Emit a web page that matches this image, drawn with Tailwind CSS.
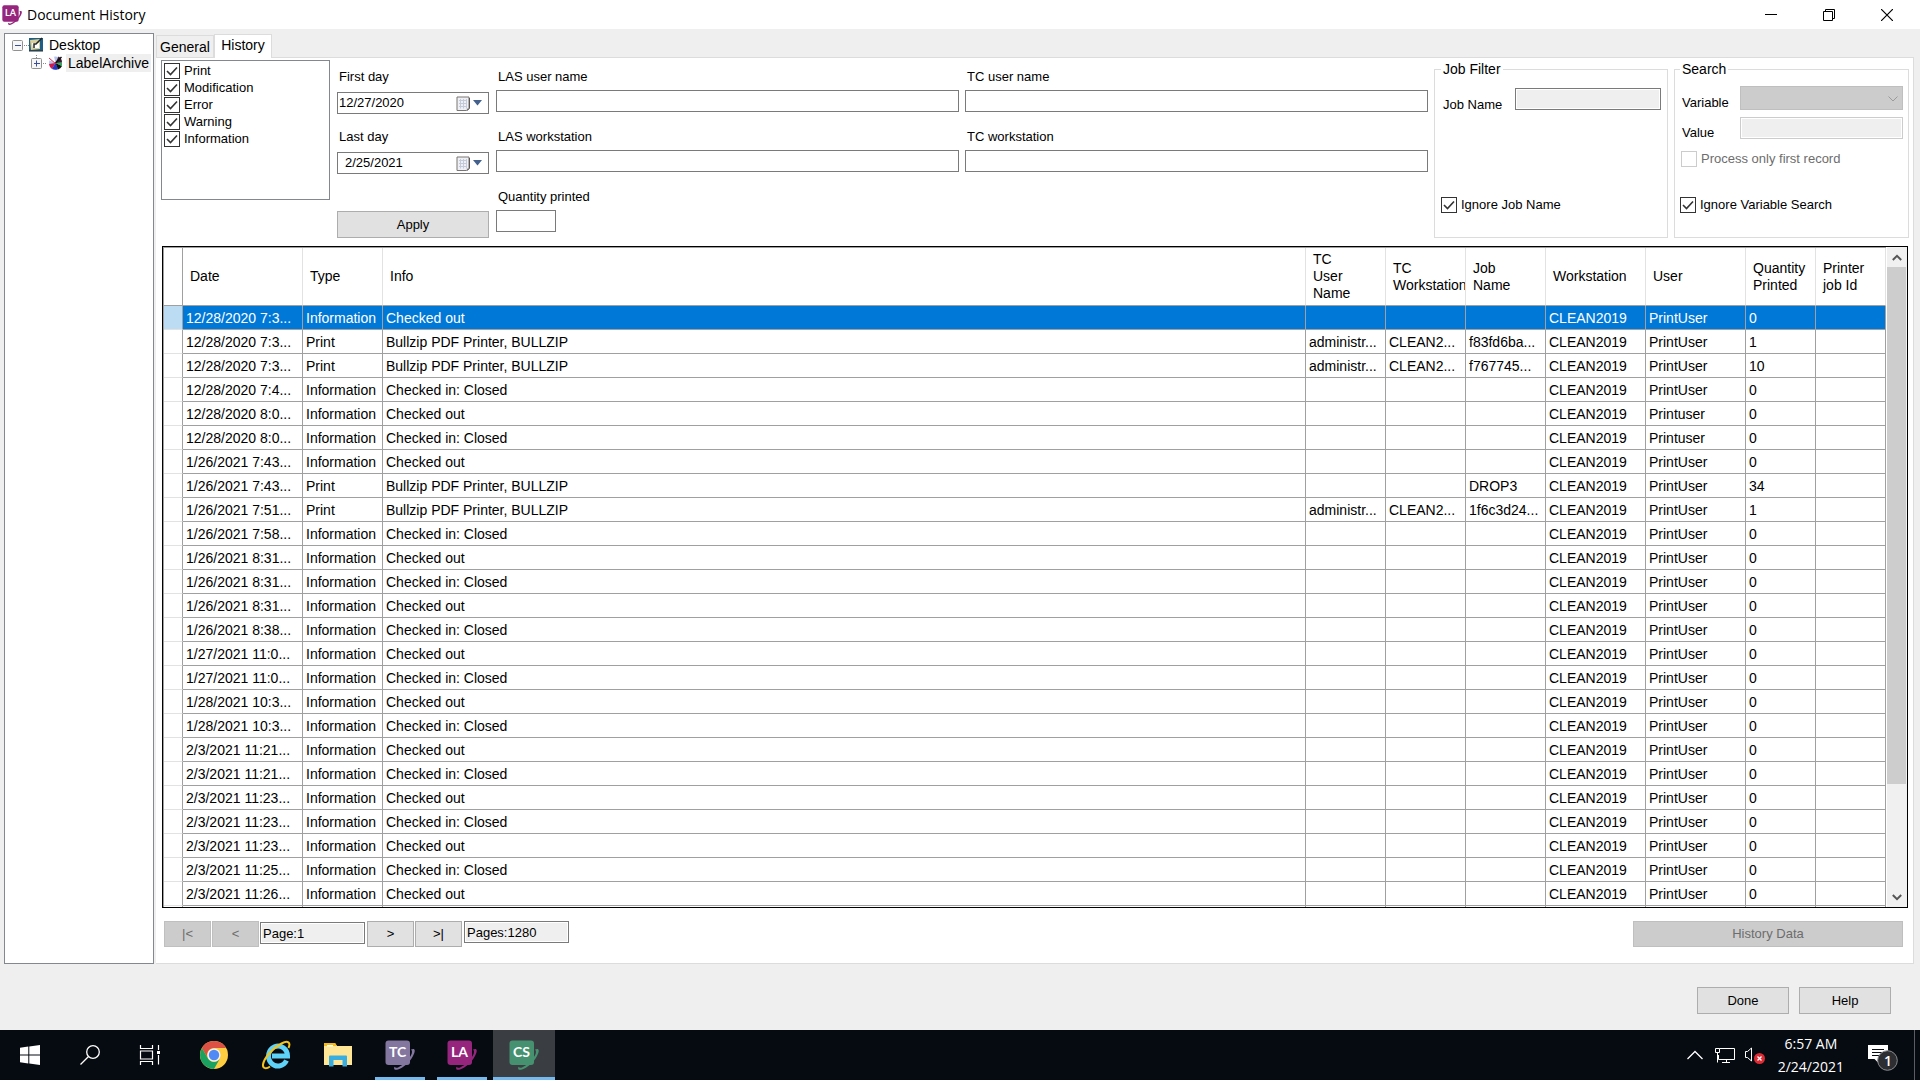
<!DOCTYPE html>
<html lang="en">
<head>
<meta charset="utf-8">
<title>Document History</title>
<script src="https://cdn.jsdelivr.net/npm/@tailwindcss/browser@4"></script>
</head>
<body class="flex min-h-screen flex-col bg-[#efefef] font-['Liberation_Sans',Arial,sans-serif] text-[13px] leading-4 text-black">

<svg class="hidden" aria-hidden="true">
  <symbol id="badge" viewBox="0 0 30 30">
    <rect x="0.5" y="0.5" width="24.500" height="24.500" rx="3" fill="currentColor"/>
    <path d="M26 9.500c4-1.800 5 .8 2 6.500-3.500 6.500-10 12-15 13.500-3.500 1-4.500-.5-3.500-2.800 1 1.300 2 1.500 4 .6 4.500-2 10-7 12.500-12 1.300-2.800 1.300-4.800 0-5.800z" fill="currentColor"/>
  </symbol>
  <symbol id="calendar" viewBox="0 0 14 15">
    <path d="M1 1h12v10.500l-2.500 3H1z" fill="#eef0f5" stroke="#7b7573"/>
    <path d="M3 4.500h8M3 7.500h8M3 10.500h8M4.500 3v9.500M7.500 3v9.500M10.500 3v9.500" stroke="#c3cad8" fill="none"/>
    <path d="M13.500 2v10.500l-2.500 2" stroke="#5c5655" fill="none"/>
  </symbol>
  <symbol id="tick" viewBox="0 0 16 16"><path d="M3 8l3.500 3.500L13 4.500" fill="none" stroke="#333" stroke-width="1.600"/></symbol>
</svg>

<header class="flex h-[29px] shrink-0 items-center bg-white pl-[2px]">
  <span class="relative h-5 w-5 text-[#96257d]">
    <svg class="h-5 w-5"><use href="#badge"/></svg>
    <span class="absolute left-[3px] top-[2px] font-['Lato',sans-serif] text-[9px] leading-3 font-bold text-white">LA</span>
  </span>
  <h1 class="ml-[5px] flex-1 font-['Open_Sans',sans-serif] text-[14px] leading-5">Document History</h1>
  <button class="flex h-7 w-[58px] items-center justify-center" aria-label="Minimize"><svg width="12" height="12"><path d="M0 5.500h12" stroke="#000"/></svg></button>
  <button class="flex h-7 w-[58px] items-center justify-center" aria-label="Restore"><svg width="12" height="12" fill="none" stroke="#000"><path d="M.5 2.500h9v9h-9zM2.500 2.500v-2h9v9h-2"/></svg></button>
  <button class="mr-1 flex h-7 w-[58px] items-center justify-center" aria-label="Close"><svg width="12" height="12"><path d="M0 0l12 12M12 0L0 12" stroke="#000" stroke-width="1.200"/></svg></button>
</header>

<main class="flex flex-1 gap-[2px] pl-1 pr-[6px] pt-1">
  <nav class="w-[150px] shrink-0 border border-[#828790] bg-white pl-[7px] pt-[2px] text-[14px]" aria-label="Documents">
    <div class="flex h-[18px] items-center">
      <svg width="37" height="18" class="shrink-0">
        <rect x=".5" y="4.500" width="10" height="10" rx="1" fill="#f7f7f7" stroke="#919191"/><path d="M3 9.500h6" stroke="#3a4f9a"/>
        <path d="M12 9.500h5" stroke="#888" stroke-dasharray="1 1"/>
        <rect x="17" y="2" width="14" height="13" fill="#1f5f84"/><path d="M18 4l10-1v10l-9 1z" fill="#d9cf9a"/><path d="M20 7h7v5h-6z" fill="#fff"/><path d="M22 12v-4h2l6-6" stroke="#20282c" stroke-width="1.500" fill="none"/><path d="M17 15h14" stroke="#2a2a2a"/>
      </svg>
      <span>Desktop</span>
    </div>
    <div class="flex h-[18px] items-center">
      <svg width="54" height="18" class="shrink-0">
        <path d="M24.500 -1v5M31 9.500h4" stroke="#888" stroke-dasharray="1 1"/>
        <rect x="19.500" y="4.500" width="10" height="10" rx="1" fill="#f7f7f7" stroke="#919191"/><path d="M22 9.500h6M24.500 6.500v6" stroke="#3a4f9a"/>
        <circle cx="43.500" cy="9" r="6.500" fill="#b9c4ec"/><path d="M43.500 9L37 6a7 7 0 0 1 5-3.500z" fill="#fff"/><path d="M43.500 9l-6.500 1a7 7 0 0 0 3 5z" fill="#d11a4a"/><path d="M43.500 9l-3.500 6a7 7 0 0 0 6 .2z" fill="#2335c4"/><path d="M43.500 9l6.500 3a6 6 0 0 1-4 3.500z" fill="#111"/><path d="M43.500 9h6.500v3z" fill="#22b14c"/><path d="M43.500 9l3-6.500a7 7 0 0 1 3.500 6z" fill="#3a1a30"/><path d="M37 4l7 6" stroke="#e0284a" fill="none"/><path d="M43.500 9l6-6" stroke="#111" stroke-width="1.500"/>
      </svg>
      <span class="bg-[#efefef] px-[2px] leading-[18px]">LabelArchive</span>
    </div>
  </nav>

  <section class="flex min-w-0 flex-1 flex-col">
    <div class="flex h-6 items-end text-[14px]" role="tablist">
      <button role="tab" aria-selected="false" class="h-[22px] w-[58px] border border-b-0 border-[#dcdcdc]">General</button>
      <button role="tab" aria-selected="true" class="relative -mb-px h-6 w-[58px] border border-b-0 border-[#dcdcdc] bg-white pb-1 text-center">History</button>
    </div>
    <div class="flex flex-1 flex-col border-y border-r border-[#dcdcdc] bg-white">

      <form class="flex gap-[6px] pl-[5px] pr-[4px] pt-[2px]" onsubmit="return false">
        <div id="kinds" class="h-[140px] w-[169px] shrink-0 border border-[#828790] pl-[2px] pt-px"></div>

        <div class="w-[154px] shrink-0 px-px">
          <div class="h-[60px] pt-2">
            <label for="first" class="block pl-[2px] leading-[18px]">First day</label>
            <div class="mt-1.5 flex h-[22px] items-center border border-[#7a7a7a] pl-[1px] pr-[6px]">
              <input id="first" value="12/27/2020" class="min-w-0 flex-1 outline-none">
              <button type="button" class="flex items-center gap-[3px]" aria-label="Open calendar for first day"><svg width="14" height="15"><use href="#calendar"/></svg><svg width="9" height="6"><path d="M0 0h9L4.500 5.500z" fill="#44618e"/></svg></button>
            </div>
          </div>
          <div class="h-[60px] pt-2">
            <label for="last" class="block pl-[2px] leading-[18px]">Last day</label>
            <div class="mt-1.5 flex h-[22px] items-center border border-[#7a7a7a] pl-[7px] pr-[6px]">
              <input id="last" value="2/25/2021" class="min-w-0 flex-1 outline-none">
              <button type="button" class="flex items-center gap-[3px]" aria-label="Open calendar for last day"><svg width="14" height="15"><use href="#calendar"/></svg><svg width="9" height="6"><path d="M0 0h9L4.500 5.500z" fill="#44618e"/></svg></button>
            </div>
          </div>
          <button class="mt-[31px] block h-[27px] w-full border border-[#adadad] bg-[#e1e1e1]">Apply</button>
        </div>

        <div class="min-w-0 flex-1">
          <div class="h-[60px] pt-2"><label for="lu" class="block pl-[2px] leading-[18px]">LAS user name</label><input id="lu" class="mt-1 block h-[22px] w-full border border-[#7a7a7a] px-1"></div>
          <div class="h-[60px] pt-2"><label for="lw" class="block pl-[2px] leading-[18px]">LAS workstation</label><input id="lw" class="mt-1 block h-[22px] w-full border border-[#7a7a7a] px-1"></div>
          <div class="h-[60px] pt-2"><label for="qp" class="block pl-[2px] leading-[18px]">Quantity printed</label><input id="qp" class="mt-1 block h-[22px] w-[60px] border border-[#7a7a7a] px-1"></div>
        </div>

        <div class="min-w-0 flex-1">
          <div class="h-[60px] pt-2"><label for="tu" class="block pl-[2px] leading-[18px]">TC user name</label><input id="tu" class="mt-1 block h-[22px] w-full border border-[#7a7a7a] px-1"></div>
          <div class="h-[60px] pt-2"><label for="tw" class="block pl-[2px] leading-[18px]">TC workstation</label><input id="tw" class="mt-1 block h-[22px] w-full border border-[#7a7a7a] px-1"></div>
        </div>

        <fieldset class="h-[178px] w-[234px] shrink-0 border border-[#dcdcdc] px-[6px]">
          <legend class="px-[2px] text-[14px] leading-[18px]">Job Filter</legend>
          <div class="mt-[10px] flex justify-between pl-[2px]">
            <label for="jn" class="pt-[9px]">Job Name</label>
            <input id="jn" disabled class="h-[22px] w-[146px] border border-[#7a7a7a] bg-[#efefef] shadow-[inset_0_0_0_1px_#fff]">
          </div>
          <label class="mt-[84px] flex items-center gap-1">
            <span class="grid h-4 w-4"><input type="checkbox" checked class="peer col-start-1 row-start-1 h-4 w-4 appearance-none border border-[#333] bg-white"><svg class="pointer-events-none invisible col-start-1 row-start-1 h-4 w-4 peer-checked:visible"><use href="#tick"/></svg></span>Ignore Job Name
          </label>
        </fieldset>

        <fieldset class="h-[178px] w-[235px] shrink-0 border border-[#dcdcdc] px-[5px]">
          <legend class="px-[2px] text-[14px] leading-[18px]">Search</legend>
          <div class="mt-2 flex justify-between pl-[2px]">
            <label for="sv" class="pt-[9px]">Variable</label>
            <span class="grid">
              <select id="sv" disabled class="col-start-1 row-start-1 h-6 w-[163px] appearance-none border border-[#bfbfbf] bg-[#ccc]"></select>
              <svg class="pointer-events-none col-start-1 row-start-1 mr-[5px] self-center justify-self-end" width="10" height="6"><path d="M.5 .5L5 5 9.500 .5" fill="none" stroke="#9a9a9a"/></svg>
            </span>
          </div>
          <div class="mt-1.5 flex h-[22px] justify-between pl-[2px]">
            <label for="va" class="pt-2">Value</label>
            <input id="va" disabled class="h-[22px] w-[163px] border border-[#ccc] bg-[#efefef] shadow-[inset_0_0_0_1px_#fff]">
          </div>
          <label class="mt-3 flex items-center gap-1 pl-px text-[#6d6d6d]"><input type="checkbox" disabled class="h-4 w-4 appearance-none border border-[#ccc] bg-white">Process only first record</label>
          <label class="mt-[30px] flex items-center gap-1">
            <span class="grid h-4 w-4"><input type="checkbox" checked class="peer col-start-1 row-start-1 h-4 w-4 appearance-none border border-[#333] bg-white"><svg class="pointer-events-none invisible col-start-1 row-start-1 h-4 w-4 peer-checked:visible"><use href="#tick"/></svg></span>Ignore Variable Search
          </label>
        </fieldset>
      </form>

      <div class="ml-1.5 mr-[5px] mt-[6px] flex h-[662px] border border-black">
        <div class="min-w-0 flex-1 overflow-hidden border-l border-t border-[#a0a0a0]">
          <table class="w-full table-fixed border-separate border-spacing-0 text-left text-[14px]">
            <colgroup><col class="w-[19px]"><col class="w-[120px]"><col class="w-[80px]"><col><col class="w-[80px]"><col class="w-[80px]"><col class="w-[80px]"><col class="w-[100px]"><col class="w-[100px]"><col class="w-[70px]"><col class="w-[70px]"></colgroup>
            <thead>
              <tr class="h-[58px] leading-[17px]">
                <th class="border-b border-r border-[#a0a0a0]"></th>
                <th class="border-b border-r border-b-[#a0a0a0] border-r-[#e2e2e2] pl-[7px] font-normal">Date</th>
                <th class="border-b border-r border-b-[#a0a0a0] border-r-[#e2e2e2] pl-[7px] font-normal">Type</th>
                <th class="border-b border-r border-b-[#a0a0a0] border-r-[#e2e2e2] pl-[7px] font-normal">Info</th>
                <th class="border-b border-r border-b-[#a0a0a0] border-r-[#e2e2e2] pl-[7px] font-normal">TC<br>User<br>Name</th>
                <th class="overflow-hidden border-b border-r border-b-[#a0a0a0] border-r-[#e2e2e2] pl-[7px] font-normal">TC<br>Workstation</th>
                <th class="border-b border-r border-b-[#a0a0a0] border-r-[#e2e2e2] pl-[7px] font-normal">Job<br>Name</th>
                <th class="border-b border-r border-b-[#a0a0a0] border-r-[#e2e2e2] pl-[7px] font-normal">Workstation</th>
                <th class="border-b border-r border-b-[#a0a0a0] border-r-[#e2e2e2] pl-[7px] font-normal">User</th>
                <th class="border-b border-r border-b-[#a0a0a0] border-r-[#e2e2e2] pl-[7px] font-normal">Quantity<br>Printed</th>
                <th class="border-b border-r border-b-[#a0a0a0] border-r-[#e2e2e2] pl-[7px] font-normal">Printer<br>job Id</th>
              </tr>
            </thead>
            <tbody id="rows"></tbody>
          </table>
        </div>
        <div class="ml-px flex w-5 shrink-0 flex-col bg-[#f0f0f0]">
          <button class="flex h-5 items-center justify-center" aria-label="Scroll up"><svg width="10" height="7"><path d="M.8 6L5 1.800 9.200 6" fill="none" stroke="#555" stroke-width="2"/></svg></button>
          <div class="mr-px grow-[5] bg-[#cdcdcd]"></div>
          <div class="grow"></div>
          <button class="flex h-5 items-center justify-center" aria-label="Scroll down"><svg width="10" height="7"><path d="M.8 1L5 5.200 9.200 1" fill="none" stroke="#555" stroke-width="2"/></svg></button>
        </div>
      </div>

      <div class="mb-4 ml-2 mr-[10px] mt-[13px] flex items-start gap-px">
        <button disabled class="h-[26px] w-[47px] border border-[#bfbfbf] bg-[#ccc] text-[#6d6d6d]">|&lt;</button>
        <button disabled class="h-[26px] w-[47px] border border-[#bfbfbf] bg-[#ccc] text-[#6d6d6d]">&lt;</button>
        <input aria-label="Current page" readonly value="Page:1" class="mt-px h-[22px] w-[105px] border border-[#7a7a7a] bg-[#efefef] pl-[2px] shadow-[inset_0_0_0_1px_#fff]">
        <button class="ml-px h-[26px] w-[47px] border border-[#adadad] bg-[#e1e1e1]">&gt;</button>
        <button class="h-[26px] w-[47px] border border-[#adadad] bg-[#e1e1e1]">&gt;|</button>
        <input aria-label="Page count" readonly value="Pages:1280" class="ml-px h-[22px] w-[105px] border border-[#7a7a7a] bg-[#efefef] pl-[2px] shadow-[inset_0_0_0_1px_#fff]">
        <button disabled class="ml-auto h-[26px] w-[270px] border border-[#bfbfbf] bg-[#ccc] text-[#6d6d6d]">History Data</button>
      </div>
    </div>
  </section>
</main>

<div class="flex h-[66px] shrink-0 justify-end gap-[10px] pr-[29px] pt-[23px]">
  <button class="h-[27px] w-[92px] border border-[#adadad] bg-[#e1e1e1]">Done</button>
  <button class="h-[27px] w-[92px] border border-[#adadad] bg-[#e1e1e1]">Help</button>
</div>

<footer class="flex h-[50px] shrink-0 items-stretch bg-[#060a11] text-white">
  <button class="flex w-[60px] items-center justify-center" aria-label="Start"><svg width="20" height="20" fill="#fff"><path d="M0 2.800l8.300-1.200v7.900H0zM9.300 1.400L20 0v9.500H9.300zM0 10.500h8.300v7.900L0 17.200zM9.300 10.500H20V20L9.300 18.600z"/></svg></button>
  <button class="flex w-[60px] items-center justify-center" aria-label="Search"><svg width="20" height="20" fill="none" stroke="#fff" stroke-width="1.300"><circle cx="13" cy="7" r="6.300"/><path d="M8.500 11.500L.5 19.500"/></svg></button>
  <button class="flex w-[60px] items-center justify-center" aria-label="Task View"><svg width="22" height="20" fill="none" stroke="#fff" stroke-width="1.200"><path d="M1.500 0v3.500h12V0M1.500 6h12v8h-12zM1.500 20v-3.500h12V20M19.500 0v5M19.500 10v9.500"/><path d="M18 6h3v3h-3z" fill="#fff" stroke="none"/></svg></button>
  <button class="ml-[3px] flex w-[62px] items-center justify-center" aria-label="Chrome"><svg width="28" height="28" viewBox="0 0 28 28"><circle cx="14" cy="14" r="14" fill="#ffcd40"/><path d="M14 0a14 14 0 0 1 12.100 7H14A7 7 0 0 0 8 17.500L1.900 7A14 14 0 0 1 14 0z" fill="#dd5144"/><path d="M1.900 7A14 14 0 0 0 14 28l6-10.500a7 7 0 0 1-12 0z" fill="#1aa260"/><circle cx="14" cy="14" r="6.600" fill="#f1f1f1"/><circle cx="14" cy="14" r="5.200" fill="#4f8af5"/></svg></button>
  <button class="flex w-[62px] items-center justify-center" aria-label="Internet Explorer"><svg width="30" height="30" viewBox="0 0 30 30" fill="none"><path d="M25.500 20.500A9.500 10 0 1 1 26.500 16H11" stroke="#5fd2f8" stroke-width="5"/><path d="M27.500 8C30 2.500 27 0 20.500 3.500 12 8 3 18 2 24.500 1.500 29 5.500 29 9 26.500" stroke="#f3c31b" stroke-width="2"/></svg></button>
  <button class="flex w-[62px] items-center justify-center" aria-label="File Explorer"><svg width="28" height="24" viewBox="0 0 28 24"><path d="M0 0h11l2 3h15v19H0z" fill="#ffe696"/><path d="M0 0h11l2 3H0z" fill="#f6b915"/><path d="M3 2h6v1.500H3z" fill="#fff"/><path d="M5 23.500V13.500Q5 12.500 6 12.500h16q1 0 1 1v10h-4.500v-6.500h-9v6.500z" fill="#3aade0"/></svg></button>
  <button class="relative flex w-[62px] items-center justify-center text-[#83769f]" aria-label="TC"><svg width="30" height="30"><use href="#badge"/></svg><span class="absolute left-[20px] top-[14px] font-['Lato',sans-serif] text-[14px] leading-4 font-bold text-white">TC</span><span class="absolute inset-x-[6px] bottom-0 h-[3px] bg-[#76b9ed]"></span></button>
  <button class="relative flex w-[62px] items-center justify-center text-[#96257d]" aria-label="LA"><svg width="30" height="30"><use href="#badge"/></svg><span class="absolute left-[20px] top-[14px] font-['Lato',sans-serif] text-[14px] leading-4 font-bold text-white">LA</span><span class="absolute inset-x-[6px] bottom-0 h-[3px] bg-[#76b9ed]"></span></button>
  <button class="relative flex w-[62px] items-center justify-center bg-[#3a3d42] text-[#469270]" aria-label="CS"><svg width="30" height="30"><use href="#badge"/></svg><span class="absolute left-[20px] top-[14px] font-['Lato',sans-serif] text-[14px] leading-4 font-bold text-white">CS</span><span class="absolute inset-x-0 bottom-0 h-[3px] bg-[#76b9ed]"></span></button>

  <div class="ml-auto flex items-center">
    <button class="mr-3" aria-label="Show hidden icons"><svg width="16" height="10"><path d="M.5 9L8 1.500 15.500 9" fill="none" stroke="#fff" stroke-width="1.300"/></svg></button>
    <svg class="mr-[10px]" width="20" height="17" fill="none" stroke="#fff"><path d="M4.500 1.500h15v11H3.500V8M11.500 12.500v3M7 15.500h8M.5 1.500h4v4h-4zM2.500 5.500v10"/></svg>
    <svg class="mr-[13px]" width="20" height="18" fill="none" stroke="#fff"><path d="M.5 5.500h2L6.500 2v13l-4-3.500h-2z"/><circle cx="14.500" cy="12.500" r="5.500" fill="#dc2b33" stroke="none"/><path d="M12.500 10.500l4 4M16.500 10.500l-4 4" stroke-width="1.300"/></svg>
    <div class="mr-6 text-center font-['Open_Sans',sans-serif] text-[14px] leading-[23px]"><div>6:57 AM</div><div>2/24/2021</div></div>
    <button class="relative mr-4 h-[30px] w-[30px]" aria-label="Notifications, 1 new">
      <svg width="30" height="32"><path d="M0 5h20v14h-9.500v4l-4-4H0z" fill="#fff"/><path d="M4 9.500h12M4 12.500h12M4 15.500h8" stroke="#060a11"/><circle cx="19.500" cy="20.500" r="9.800" fill="#2c2e32" stroke="#8b8d90"/></svg>
      <span class="absolute left-[16px] top-[12px] font-['Open_Sans',sans-serif] text-[14px] leading-[18px] font-semibold">1</span>
    </button>
    <span class="mr-[5px] h-[50px] w-px bg-[#5a5d62]"></span>
  </div>
</footer>

<script>
  document.getElementById('kinds').innerHTML = ['Print', 'Modification', 'Error', 'Warning', 'Information'].map(k => `
    <label class="flex h-[17px] items-center gap-1"><span class="grid h-4 w-4"><input type="checkbox" checked class="peer col-start-1 row-start-1 h-4 w-4 appearance-none border border-[#333] bg-white"><svg class="pointer-events-none invisible col-start-1 row-start-1 h-4 w-4 peer-checked:visible"><use href="#tick"/></svg></span>${k}</label>`).join('');

  const OUT = 'Checked out', IN = 'Checked in: Closed', PDF = 'Bullzip PDF Printer, BULLZIP';
  const records = [
    ['12/28/2020 7:3...', OUT],
    ['12/28/2020 7:3...', PDF, 'administr...', 'CLEAN2...', 'f83fd6ba...', 'PrintUser', '1'],
    ['12/28/2020 7:3...', PDF, 'administr...', 'CLEAN2...', 'f767745...', 'PrintUser', '10'],
    ['12/28/2020 7:4...', IN],
    ['12/28/2020 8:0...', OUT, '', '', '', 'Printuser'],
    ['12/28/2020 8:0...', IN, '', '', '', 'Printuser'],
    ['1/26/2021 7:43...', OUT],
    ['1/26/2021 7:43...', PDF, '', '', 'DROP3', 'PrintUser', '34'],
    ['1/26/2021 7:51...', PDF, 'administr...', 'CLEAN2...', '1f6c3d24...', 'PrintUser', '1'],
    ['1/26/2021 7:58...', IN],
    ['1/26/2021 8:31...', OUT],
    ['1/26/2021 8:31...', IN],
    ['1/26/2021 8:31...', OUT],
    ['1/26/2021 8:38...', IN],
    ['1/27/2021 11:0...', OUT],
    ['1/27/2021 11:0...', IN],
    ['1/28/2021 10:3...', OUT],
    ['1/28/2021 10:3...', IN],
    ['2/3/2021 11:21...', OUT],
    ['2/3/2021 11:21...', IN],
    ['2/3/2021 11:23...', OUT],
    ['2/3/2021 11:23...', IN],
    ['2/3/2021 11:23...', OUT],
    ['2/3/2021 11:25...', IN],
    ['2/3/2021 11:26...', OUT],
    null
  ];
  document.getElementById('rows').innerHTML = records.map((r, i) => {
    let cells = Array(10).fill('');
    if (r) {
      const [date, info, tcUser = '', tcStation = '', job = '', user = 'PrintUser', qty = '0'] = r;
      cells = [date, info === PDF ? 'Print' : 'Information', info, tcUser, tcStation, job, 'CLEAN2019', user, qty, ''];
    }
    return `<tr class="h-6 ${i ? '' : 'bg-[#0078d7] text-white'}"><td class="border-b border-r border-b-[#e2e2e2] border-r-[#a0a0a0] ${i ? '' : 'bg-[#bcdcf4]'}"></td>` +
      cells.map(c => `<td class="overflow-hidden border-b border-r border-[#a0a0a0] pl-[3px] whitespace-nowrap">${c}</td>`).join('') + '</tr>';
  }).join('');
</script>
</body>
</html>
